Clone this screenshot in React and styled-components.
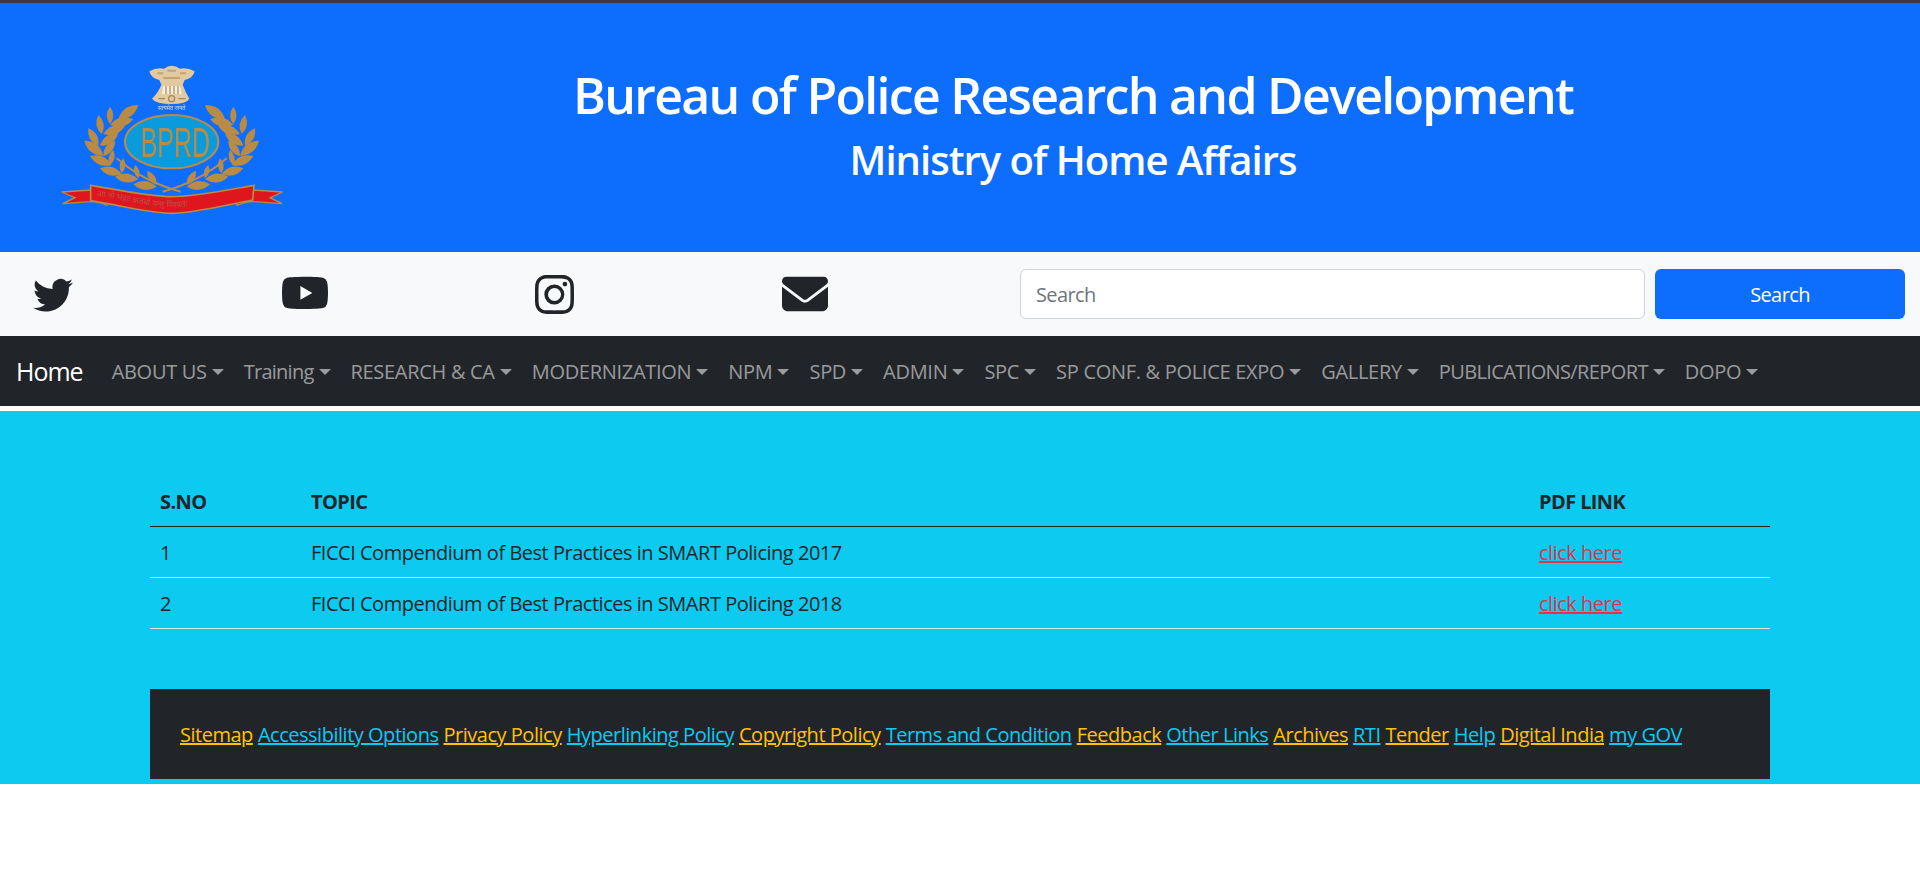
import React from "react";
import styled, { createGlobalStyle } from "styled-components";
import { BsTwitter, BsYoutube, BsInstagram } from "react-icons/bs";
import { FaEnvelope } from "react-icons/fa6";

const GlobalStyle = createGlobalStyle`
  body {
    margin: 0;
    background: #fff;
    color: #212529;
    font-family: "Open Sans", "Noto Sans", sans-serif;
    font-size: 20px;
    line-height: 1.5;
  }
`;

const Header = styled.header`
  height: 249px;
  border-top: 3px solid #3a3b3d;
  background: #0d6efd;
  display: flex;
  align-items: flex-start;
`;

const Crest = styled.svg`
  flex: none;
  width: 250px;
  height: 180px;
  margin: 47px 0 0 50px;
  filter: blur(0.6px);
`;

const Titles = styled.div`
  flex: 1;
  padding: 61px 74px 0 0;
  color: #fff;
  text-align: center;
`;

const Title = styled.h1`
  margin: 0;
  font-size: 50px;
  font-weight: 600;
  line-height: 62px;
  letter-spacing: -1.7px;
`;

const Subtitle = styled.h2`
  margin: 4px 0 0;
  font-size: 40px;
  font-weight: 600;
  line-height: 60px;
  letter-spacing: -1px;
`;

const SocialBar = styled.div`
  height: 84px;
  background: #f8f9fa;
  display: flex;
  align-items: center;
  padding: 0 15px 0 33px;
`;

const SocialLink = styled.a`
  width: ${(p) => p.$width}px;
  display: flex;
  color: #212529;
  font-size: ${(p) => p.$size}px;
`;

const SearchForm = styled.form`
  margin-left: auto;
  display: flex;
  gap: 10px;
`;

const SearchInput = styled.input`
  width: 625px;
  height: 50px;
  box-sizing: border-box;
  padding: 0 15px;
  border: 1px solid #ced4da;
  border-radius: 6px;
  background: #fff;
  font: inherit;
  letter-spacing: -0.6px;
  &::placeholder {
    color: #6c757d;
  }
`;

const SearchButton = styled.button`
  width: 250px;
  height: 50px;
  padding: 2px 0 0;
  border: 0;
  border-radius: 6px;
  background: #0d6efd;
  color: #fff;
  font: inherit;
  letter-spacing: -0.6px;
`;

const NavBar = styled.nav`
  height: 70px;
  margin-bottom: 5px;
  padding: 2px 0 0 16px;
  box-sizing: border-box;
  background: #212529;
  display: flex;
  align-items: center;
`;

const Brand = styled.a`
  margin-right: 19px;
  color: #fff;
  font-size: 25px;
  letter-spacing: -1px;
`;

const NavItem = styled.a`
  padding: 0 10px;
  color: rgba(255, 255, 255, 0.55);
  letter-spacing: ${(p) => p.$spacing}px;
  white-space: nowrap;
  &::after {
    content: "";
    display: inline-block;
    margin-left: 5px;
    vertical-align: 4px;
    border-top: 6px solid;
    border-left: 6px solid transparent;
    border-right: 6px solid transparent;
  }
`;

const Content = styled.main`
  height: 373px;
  box-sizing: border-box;
  padding: 64px 150px 0;
  background: #0dcaf0;
`;

const Table = styled.table`
  width: 100%;
  border-collapse: collapse;
  table-layout: fixed;
`;

const HeadCell = styled.th`
  box-sizing: border-box;
  width: ${(p) => p.$width};
  height: 51px;
  padding: 4px 10px 0;
  border-bottom: 1px solid #212529;
  text-align: left;
  font-weight: 700;
  letter-spacing: -0.6px;
`;

const Cell = styled.td`
  box-sizing: border-box;
  height: 51px;
  padding: 2px 10px 0;
  border-bottom: 1px solid #dee2e6;
  letter-spacing: -0.48px;
`;

const PdfLink = styled.a`
  color: #e8304a;
  text-decoration: underline;
`;

const Footer = styled.footer`
  height: 90px;
  box-sizing: border-box;
  margin-top: 60px;
  padding: 2px 30px 0;
  background: #212529;
  display: flex;
  align-items: center;
  gap: 5px;
`;

const FooterLink = styled.a`
  color: ${(p) => (p.$alt ? "#0dcaf0" : "#ffc107")};
  text-decoration: underline;
  letter-spacing: -0.48px;
  white-space: nowrap;
`;

const navLinks = [
  { label: "ABOUT US", spacing: -0.3 },
  { label: "Training", spacing: -0.75 },
  { label: "RESEARCH & CA", spacing: -0.3 },
  { label: "MODERNIZATION", spacing: -0.3 },
  { label: "NPM", spacing: -0.3 },
  { label: "SPD", spacing: -0.3 },
  { label: "ADMIN", spacing: -0.3 },
  { label: "SPC", spacing: -0.3 },
  { label: "SP CONF. & POLICE EXPO", spacing: -0.3 },
  { label: "GALLERY", spacing: -0.3 },
  { label: "PUBLICATIONS/REPORT", spacing: -0.62 },
  { label: "DOPO", spacing: -0.3 },
];

const footerLinks = [
  "Sitemap",
  "Accessibility Options",
  "Privacy Policy",
  "Hyperlinking Policy",
  "Copyright Policy",
  "Terms and Condition",
  "Feedback",
  "Other Links",
  "Archives",
  "RTI",
  "Tender",
  "Help",
  "Digital India",
  "my GOV",
];

const rows = [
  ["1", "FICCI Compendium of Best Practices in SMART Policing 2017"],
  ["2", "FICCI Compendium of Best Practices in SMART Policing 2018"],
];

// tip x, tip y, base x, base y, for the left branch of the wreath
const leaves = [
  [265, 165, 205, 208],
  [180, 170, 180, 222],
  [250, 208, 180, 224],
  [145, 195, 155, 252],
  [225, 228, 160, 252],
  [115, 235, 145, 287],
  [205, 250, 150, 287],
  [103, 272, 160, 317],
  [195, 272, 160, 318],
  [120, 318, 185, 345],
  [190, 300, 180, 345],
  [150, 355, 215, 372],
  [220, 325, 215, 370],
  [195, 380, 265, 388],
  [255, 345, 265, 385],
  [250, 403, 320, 410],
  [292, 362, 320, 405],
];

function leafPath([tx, ty, bx, by]) {
  const mx = (tx + bx) / 2;
  const my = (ty + by) / 2;
  const nx = (by - ty) * 0.38;
  const ny = (tx - bx) * 0.38;
  return `M${bx} ${by}Q${mx + nx} ${my + ny} ${tx} ${ty}Q${mx - nx} ${my - ny} ${bx} ${by}Z`;
}

function Logo() {
  return (
    <Crest viewBox="0 0 750 540">
      {/* lion capital */}
      <path
        d="M298 64 Q318 52 342 56 Q365 38 390 56 Q412 52 434 64 Q430 84 404 90 L398 104 Q406 126 418 146 Q410 162 365 162 Q318 162 306 146 Q326 126 334 104 L328 90 Q302 84 298 64Z"
        fill="#e3c9a0"
      />
      <path d="M340 108h50l5 24h-60z" fill="#f6efe0" />
      <path d="M348 108v24M360 108v24M372 108v24M384 108v24" stroke="#b3925f" strokeWidth="4" />
      <path d="M322 70h18M390 70h18M352 62h26M340 84h50" stroke="#c4a473" strokeWidth="6" />
      <circle cx="365" cy="146" r="9" fill="none" stroke="#a98a5c" strokeWidth="4" />
      <path d="M325 146h20M385 146h22" stroke="#a98a5c" strokeWidth="4" />
      <text x="365" y="181" textAnchor="middle" fontFamily="Noto Sans" fontSize="17" fill="#d8d8c8">
        सत्यमेव जयते
      </text>
      {/* wreath */}
      <g fill="#b98b45">
        {leaves.map((leaf) => (
          <path key={leaf.join()} d={leafPath(leaf)} />
        ))}
        {leaves.map((leaf) => (
          <path key={leaf.join()} d={leafPath(leaf)} transform="matrix(-1 0 0 1 730 0)" />
        ))}
      </g>
      <path d="M200 325Q280 395 392 425M530 325Q450 395 338 425" fill="none" stroke="#b98b45" strokeWidth="6" />
      {/* oval */}
      <ellipse cx="365" cy="275" rx="140" ry="80" fill="#0a9bdc" stroke="#b98b45" strokeWidth="6" />
      <text x="376" y="320" textAnchor="middle" fontFamily="Liberation Sans" fontSize="125" fill="#b98b45" textLength="208" lengthAdjust="spacingAndGlyphs">
        BPRD
      </text>
      {/* ribbon */}
      <path d="M125 420 L35 426 L75 443 L38 461 L120 455 Q140 452 170 466 L190 440 Z" fill="#e0161e" stroke="#b98b45" strokeWidth="4" />
      <path d="M608 420 L698 426 L660 443 L696 461 L612 455 Q592 452 562 466 L545 440 Z" fill="#e0161e" stroke="#b98b45" strokeWidth="4" />
      <path d="M122 406 C220 422 300 440 365 440 C430 440 520 422 612 406 L608 450 C520 466 430 490 365 490 C300 490 210 466 122 452 Z" fill="#e0161e" stroke="#b98b45" strokeWidth="5" />
      <path id="ribbon-line" d="M140 438 C230 450 300 472 365 472 C430 472 500 450 595 436" fill="none" />
      <text fontFamily="Noto Sans" fontSize="25" fill="#b5534a">
        <textPath href="#ribbon-line">आ नो भद्राः क्रतवो यन्तु विश्वतः</textPath>
      </text>
    </Crest>
  );
}

export default function App() {
  return (
    <>
      <GlobalStyle />
      <Header>
        <Logo />
        <Titles>
          <Title>Bureau of Police Research and Development</Title>
          <Subtitle>Ministry of Home Affairs</Subtitle>
        </Titles>
      </Header>
      <SocialBar>
        <SocialLink $width={249} $size={40}><BsTwitter /></SocialLink>
        <SocialLink $width={253} $size={46}><BsYoutube /></SocialLink>
        <SocialLink $width={247} $size={39}><BsInstagram /></SocialLink>
        <SocialLink $width={46} $size={46}><FaEnvelope /></SocialLink>
        <SearchForm>
          <SearchInput placeholder="Search" />
          <SearchButton type="button">Search</SearchButton>
        </SearchForm>
      </SocialBar>
      <NavBar>
        <Brand>Home</Brand>
        {navLinks.map((link) => (
          <NavItem key={link.label} $spacing={link.spacing}>{link.label}</NavItem>
        ))}
      </NavBar>
      <Content>
        <Table>
          <thead>
            <tr>
              <HeadCell $width="151px">S.NO</HeadCell>
              <HeadCell>TOPIC</HeadCell>
              <HeadCell $width="241px">PDF LINK</HeadCell>
            </tr>
          </thead>
          <tbody>
            {rows.map(([no, topic]) => (
              <tr key={no}>
                <Cell>{no}</Cell>
                <Cell>{topic}</Cell>
                <Cell><PdfLink>click here</PdfLink></Cell>
              </tr>
            ))}
          </tbody>
        </Table>
        <Footer>
          {footerLinks.map((link, i) => (
            <FooterLink key={link} $alt={i % 2 === 1}>{link}</FooterLink>
          ))}
        </Footer>
      </Content>
    </>
  );
}
